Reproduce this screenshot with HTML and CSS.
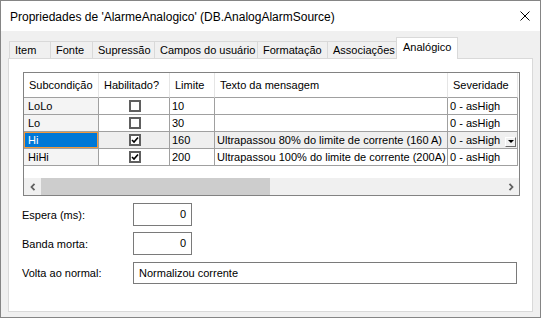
FILE: index.html
```html
<!DOCTYPE html>
<html lang="pt">
<head>
<meta charset="utf-8">
<title>Propriedades</title>
<link rel="stylesheet" href="styles.css">
</head>
<body>
<div class="window">
  <div class="titlebar">
    <span class="title">Propriedades de 'AlarmeAnalogico' (DB.AnalogAlarmSource)</span>
    <svg class="close" width="10" height="10" viewBox="0 0 10 10"><path d="M0.5 0.5 L9.5 9.5 M9.5 0.5 L0.5 9.5" stroke="#000" stroke-width="1" fill="none"/></svg>
  </div>
  <div class="body">
    <div class="tabs">
      <div class="tab t-item">Item</div>
      <div class="tab t-fonte">Fonte</div>
      <div class="tab t-supr">Supressão</div>
      <div class="tab t-campos">Campos do usuário</div>
      <div class="tab t-form">Formatação</div>
      <div class="tab t-assoc">Associações</div>
      <div class="tab active">Analógico</div>
    </div>
    <div class="panel">
      <div class="grid">
        <div class="table">
          <div class="hcell">Subcondição</div>
          <div class="hcell">Habilitado?</div>
          <div class="hcell">Limite</div>
          <div class="hcell">Texto da mensagem</div>
          <div class="hcell">Severidade</div>

          <div class="cell first">LoLo</div>
          <div class="cell center"><span class="cb"></span></div>
          <div class="cell">10</div>
          <div class="cell"></div>
          <div class="cell">0 - asHigh</div>

          <div class="cell first">Lo</div>
          <div class="cell center"><span class="cb"></span></div>
          <div class="cell">30</div>
          <div class="cell"></div>
          <div class="cell">0 - asHigh</div>

          <div class="cell first current">Hi</div>
          <div class="cell center sel"><span class="cb checked"><svg width="8" height="8" viewBox="0 0 8 8"><path d="M1 4 L3 6 L7 1.5" stroke="#000" stroke-width="1.6" fill="none"/></svg></span></div>
          <div class="cell sel">160</div>
          <div class="cell sel">Ultrapassou 80% do limite de corrente (160 A)</div>
          <div class="cell sel combo">0 - asHigh<span class="dd"><svg width="6" height="4" viewBox="0 0 6 4"><path d="M0 0 H6 L3 3 Z" fill="#000"/></svg></span></div>

          <div class="cell first">HiHi</div>
          <div class="cell center"><span class="cb checked"><svg width="8" height="8" viewBox="0 0 8 8"><path d="M1 4 L3 6 L7 1.5" stroke="#000" stroke-width="1.6" fill="none"/></svg></span></div>
          <div class="cell">200</div>
          <div class="cell">Ultrapassou 100% do limite de corrente (200A)</div>
          <div class="cell">0 - asHigh</div>
        </div>
        <div class="filler"></div>
        <div class="hscroll">
          <div class="arrow"><svg width="6" height="8" viewBox="0 0 6 8"><path d="M4.5 0.8 L1.5 4 L4.5 7.2" stroke="#606060" stroke-width="1.8" fill="none"/></svg></div>
          <div class="thumb"></div>
          <div class="track"></div>
          <div class="arrow"><svg width="6" height="8" viewBox="0 0 6 8"><path d="M1.5 0.8 L4.5 4 L1.5 7.2" stroke="#606060" stroke-width="1.8" fill="none"/></svg></div>
        </div>
      </div>
      <div class="fields">
        <div class="label">Espera (ms):</div>
        <div class="input num">0</div>
        <div class="label">Banda morta:</div>
        <div class="input num">0</div>
        <div class="label volta">Volta ao normal:</div>
        <div class="input text volta">Normalizou corrente</div>
      </div>
    </div>
  </div>
</div>
</body>
</html>
```

FILE: styles.css
```css
* { box-sizing: border-box; }
html, body { margin: 0; padding: 0; }
body {
  width: 541px;
  height: 318px;
  font-family: "Liberation Sans", Arial, sans-serif;
  font-size: 11px;
  color: #000;
  background: #fff;
}
.window {
  width: 541px;
  height: 318px;
  border: 1px solid #858585;
  display: flex;
  flex-direction: column;
  background: #f0f0f0;
}
.titlebar {
  height: 30px;
  background: #fff;
  display: flex;
  align-items: center;
  justify-content: space-between;
  padding: 0 10px 0 9px;
  flex: none;
}
.title {
  font-size: 12px;
  margin-top: 1px;
}
.close { margin-top: 0; margin-right: 0; }
.body {
  flex: 1;
  display: flex;
  flex-direction: column;
  padding: 0 7px 5px 7px;
}
.tabs {
  height: 27px;
  flex: none;
  display: flex;
  align-items: flex-end;
  padding-left: 1px;
}
.tab {
  height: 17px;
  line-height: 16px;
  border: 1px solid #d9d9d9;
  border-bottom: none;
  margin-right: -1px;
  padding-left: 5px;
  background: #f0f0f0;
  white-space: nowrap;
}
.t-item { width: 42px; }
.t-fonte { width: 43px; }
.t-supr { width: 63px; }
.t-campos { width: 104px; }
.t-form { width: 71px; }
.t-assoc { width: 70px; }
.tab.active {
  position: relative;
  z-index: 1;
  height: 22px;
  width: 62px;
  margin-bottom: -1px;
  padding-top: 1px;
  padding-left: 6px;
  background: #fff;
}
.panel {
  flex: 1;
  background: #fff;
  border: 1px solid #d9d9d9;
  padding: 13px 12px 0 14px;
}
.grid {
  height: 124px;
  border: 1px solid #828282;
  display: flex;
  flex-direction: column;
}
.table {
  display: grid;
  grid-template-columns: 75px 71px 45px 233px 70px;
  grid-auto-rows: 17px;
  grid-template-rows: 25px;
}
.hcell {
  border-right: 1px solid #e5e5e5;
  border-bottom: 1px solid #a0a0a0;
  padding-left: 5px;
  display: flex;
  align-items: center;
  padding-bottom: 1px;
  white-space: nowrap;
}
.cell {
  border-right: 1px solid #a0a0a0;
  border-bottom: 1px solid #a0a0a0;
  padding-left: 2px;
  line-height: 16px;
  white-space: nowrap;
  overflow: hidden;
  position: relative;
}
.cell.first { padding-left: 4px; background: #f4f4f4; }
.cell.center { display: flex; justify-content: center; align-items: center; padding-left: 0; }
.cell.sel { background: #efefef; }
.cell.current {
  background: #0078d7;
  color: #fff;
  box-shadow: inset 0 0 0 1px #f39a3d;
}
.cb {
  width: 12px;
  height: 12px;
  border: 2px solid #5f5f5f;
  background: #fff;
  display: flex;
  align-items: center;
  justify-content: center;
  margin-left: 1px;
}
.combo { display: flex; align-items: center; }
.dd {
  position: absolute;
  left: 57px;
  top: 5px;
  width: 11px;
  height: 10px;
  background: #f0f0f0;
  border-top: 1px solid #fff;
  border-left: 1px solid #fff;
  border-right: 1px solid #6a6a6a;
  border-bottom: 1px solid #6a6a6a;
  display: flex;
  align-items: center;
  justify-content: center;
}
.filler { height: 12px; flex: none; }
.hscroll {
  height: 17px;
  flex: none;
  display: flex;
  background: #f0f0f0;
}
.arrow {
  width: 17px;
  display: flex;
  align-items: center;
  justify-content: center;
}
.thumb { width: 229px; background: #cdcdcd; }
.track { flex: 1; }
.fields {
  display: grid;
  grid-template-columns: 111px 59px;
  grid-auto-rows: 23px;
  row-gap: 6px;
  margin-top: 7px;
  margin-left: -1px;
}
.label {
  display: flex;
  align-items: center;
  font-size: 11px;
}
.input {
  border: 1px solid #7a7a7a;
  background: #fff;
  line-height: 20px;
}
.input.num { text-align: right; padding-right: 5px; }
.input.text {
  grid-column: 2;
  width: 384px;
  padding-left: 5px;
  line-height: 16px;
  padding-top: 2px;
}
.volta { margin-top: 1px; }
.label.volta { margin-top: 0; }
```
